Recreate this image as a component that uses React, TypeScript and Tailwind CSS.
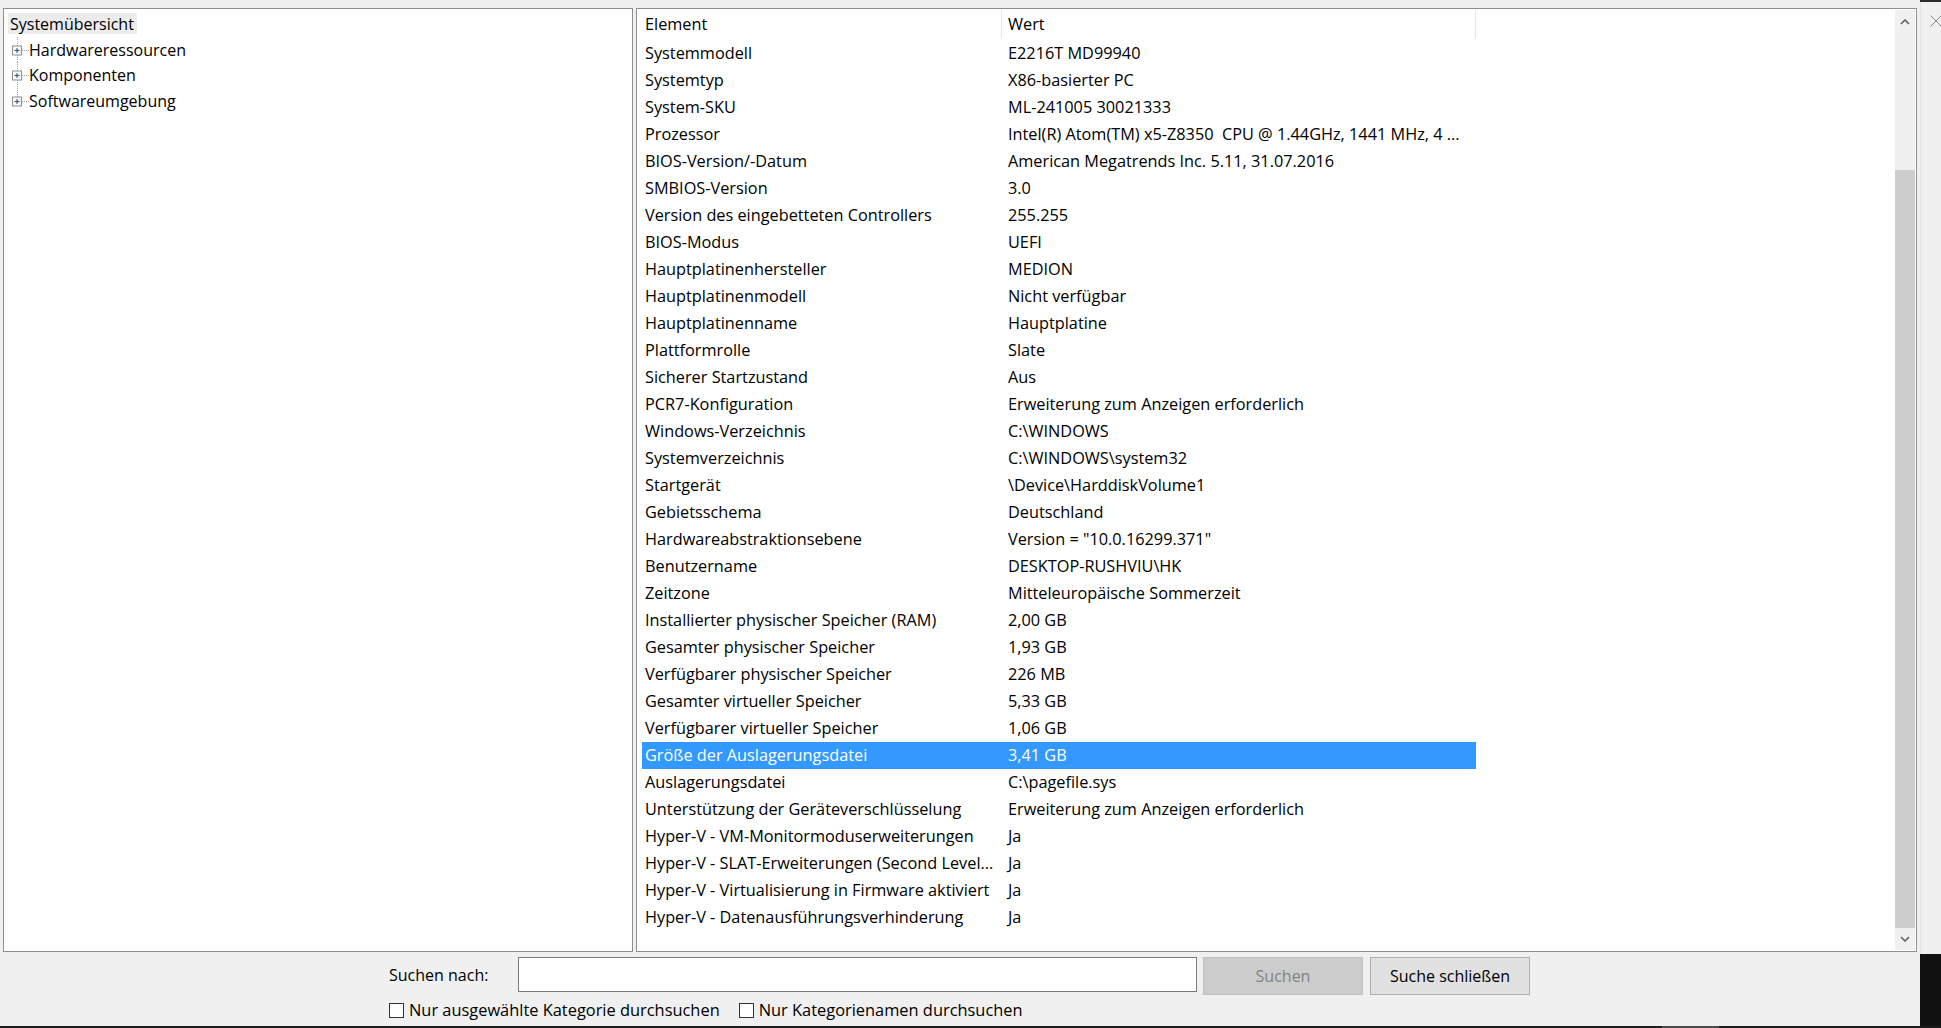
import React from "react";

const rows: [string, string][] = [
  ["Systemmodell", "E2216T MD99940"],
  ["Systemtyp", "X86-basierter PC"],
  ["System-SKU", "ML-241005 30021333"],
  ["Prozessor", "Intel(R) Atom(TM) x5-Z8350  CPU @ 1.44GHz, 1441 MHz, 4 ..."],
  ["BIOS-Version/-Datum", "American Megatrends Inc. 5.11, 31.07.2016"],
  ["SMBIOS-Version", "3.0"],
  ["Version des eingebetteten Controllers", "255.255"],
  ["BIOS-Modus", "UEFI"],
  ["Hauptplatinenhersteller", "MEDION"],
  ["Hauptplatinenmodell", "Nicht verfügbar"],
  ["Hauptplatinenname", "Hauptplatine"],
  ["Plattformrolle", "Slate"],
  ["Sicherer Startzustand", "Aus"],
  ["PCR7-Konfiguration", "Erweiterung zum Anzeigen erforderlich"],
  ["Windows-Verzeichnis", "C:\\WINDOWS"],
  ["Systemverzeichnis", "C:\\WINDOWS\\system32"],
  ["Startgerät", "\\Device\\HarddiskVolume1"],
  ["Gebietsschema", "Deutschland"],
  ["Hardwareabstraktionsebene", 'Version = "10.0.16299.371"'],
  ["Benutzername", "DESKTOP-RUSHVIU\\HK"],
  ["Zeitzone", "Mitteleuropäische Sommerzeit"],
  ["Installierter physischer Speicher (RAM)", "2,00 GB"],
  ["Gesamter physischer Speicher", "1,93 GB"],
  ["Verfügbarer physischer Speicher", "226 MB"],
  ["Gesamter virtueller Speicher", "5,33 GB"],
  ["Verfügbarer virtueller Speicher", "1,06 GB"],
  ["Größe der Auslagerungsdatei", "3,41 GB"],
  ["Auslagerungsdatei", "C:\\pagefile.sys"],
  ["Unterstützung der Geräteverschlüsselung", "Erweiterung zum Anzeigen erforderlich"],
  ["Hyper-V - VM-Monitormoduserweiterungen", "Ja"],
  ["Hyper-V - SLAT-Erweiterungen (Second Level...", "Ja"],
  ["Hyper-V - Virtualisierung in Firmware aktiviert", "Ja"],
  ["Hyper-V - Datenausführungsverhinderung", "Ja"],
];

const SELECTED = 26;

function TreeNode({ label, last }: { label: string; last?: boolean }) {
  return (
    <div className="flex h-[25.7px] items-center">
      <svg width="21" height="26" viewBox="0 0 21 26" className="shrink-0">
        <line x1="9.5" y1="0" x2="9.5" y2={last ? 13 : 26} stroke="#a0a0a0" strokeDasharray="1 1" />
        <line x1="14" y1="13.5" x2="21" y2="13.5" stroke="#a0a0a0" strokeDasharray="1 1" />
        <rect x="4.5" y="9" width="9" height="9" fill="#f7f7f7" stroke="#919191" />
        <line x1="6.5" y1="13.5" x2="11.5" y2="13.5" stroke="#2c4a87" />
        <line x1="9" y1="11" x2="9" y2="16" stroke="#2c4a87" />
      </svg>
      <span className="whitespace-nowrap">{label}</span>
    </div>
  );
}

function TreePanel() {
  return (
    <div className="w-[630px] border border-[#8f9092] bg-white pt-[2px] text-[16px] text-black">
      <div className="flex h-[25.7px] items-center">
        <span className="ml-[4px] flex h-[21px] items-center bg-[#ececec] pl-[2px] pr-[3px]">Systemübersicht</span>
      </div>
      <div className="pl-[4px]">
        <TreeNode label="Hardwareressourcen" />
        <TreeNode label="Komponenten" />
        <TreeNode label="Softwareumgebung" last />
      </div>
    </div>
  );
}

function Chevron({ down }: { down?: boolean }) {
  return (
    <svg width="10" height="6" viewBox="0 0 10 6">
      <polyline
        points={down ? "1,1 5,5 9,1" : "1,5 5,1 9,5"}
        fill="none"
        stroke="#606060"
        strokeWidth="1.6"
      />
    </svg>
  );
}

function Scrollbar() {
  return (
    <div className="my-[1px] mr-[1px] flex w-[20px] shrink-0 flex-col bg-[#f0f0f0]">
      <div className="flex h-[23px] items-center justify-center">
        <Chevron />
      </div>
      <div className="h-[137px]" />
      <div className="flex-1 bg-[#cdcdcd]" />
      <div className="flex h-[22px] items-center justify-center">
        <Chevron down />
      </div>
    </div>
  );
}

function DetailPanel() {
  return (
    <div className="flex w-[1281px] border border-[#8f9092] bg-white text-[16.3px] text-black">
      <div className="flex-1 overflow-hidden">
        <div className="ml-[5px] w-[834px]">
          <div className="flex h-[31px] items-center">
            <div className="flex h-[29px] w-[360px] items-center border-r border-[#e5e5e5] pl-[3px]">Element</div>
            <div className="flex h-[29px] w-[474px] items-center border-r border-[#e5e5e5] pl-[6px]">Wert</div>
          </div>
          {rows.map(([k, v], i) => (
            <div
              key={k}
              className={
                i === SELECTED
                  ? "flex h-[27px] items-center bg-[#3399ff] text-white"
                  : "flex h-[27px] items-center"
              }
            >
              <div className="w-[360px] overflow-hidden whitespace-nowrap pl-[3px]">{k}</div>
              <div className="w-[474px] overflow-hidden whitespace-pre pl-[6px]">{v}</div>
            </div>
          ))}
        </div>
      </div>
      <Scrollbar />
    </div>
  );
}

function Checkbox({ label }: { label: string }) {
  return (
    <label className="flex items-center gap-[5px]">
      <span className="h-[15px] w-[15px] border border-[#333333] bg-white" />
      <span className="whitespace-nowrap">{label}</span>
    </label>
  );
}

function SearchBar() {
  return (
    <div className="flex flex-1 flex-col pl-[389px] pt-[5px] text-[16px] text-black">
      <div className="flex items-start">
        <div className="flex h-[35px] w-[129px] items-center">Suchen nach:</div>
        <div className="h-[35px] w-[679px] border border-[#7a7a7a] bg-white" />
        <button className="ml-[6px] h-[38px] w-[160px] border border-[#bfbfbf] bg-[#cccccc] text-[#838383]">
          Suchen
        </button>
        <button className="ml-[7px] h-[38px] w-[160px] border border-[#adadad] bg-[#e1e1e1]">
          Suche schließen
        </button>
      </div>
      <div className="mt-[3px] flex items-center gap-[19px] text-[16.4px]">
        <Checkbox label="Nur ausgewählte Kategorie durchsuchen" />
        <Checkbox label="Nur Kategorienamen durchsuchen" />
      </div>
    </div>
  );
}

export default function App() {
  return (
    <div className="flex h-[1028px] w-[1941px] flex-col overflow-hidden bg-[#f0f0f0] font-['Open_Sans','Noto_Sans',sans-serif]">
      <div className="flex flex-1">
        <div className="flex w-[1920px] flex-col">
          <div className="flex h-[952px] gap-[3px] pl-[3px] pt-[8px]">
            <TreePanel />
            <DetailPanel />
          </div>
          <SearchBar />
        </div>
        <div className="flex w-[21px] flex-col">
          <div className="h-[2px] bg-[#2b2b2b]" />
          <div className="h-[952px] border-l border-[#e3e3e3] bg-[#f0f0f0] pl-[9px] pt-[13px]">
            <svg width="12" height="12" viewBox="0 0 12 12">
              <path d="M0.5 0.5 L11.5 11.5 M11.5 0.5 L0.5 11.5" stroke="#8a8a8a" strokeWidth="1" />
            </svg>
          </div>
          <div className="flex-1 bg-[#111111]" />
        </div>
      </div>
      <div className="flex h-[2px] bg-[#1e1e1e]">
        <div className="ml-[1662px] w-[57px] bg-[#4a4a4a]" />
      </div>
    </div>
  );
}
